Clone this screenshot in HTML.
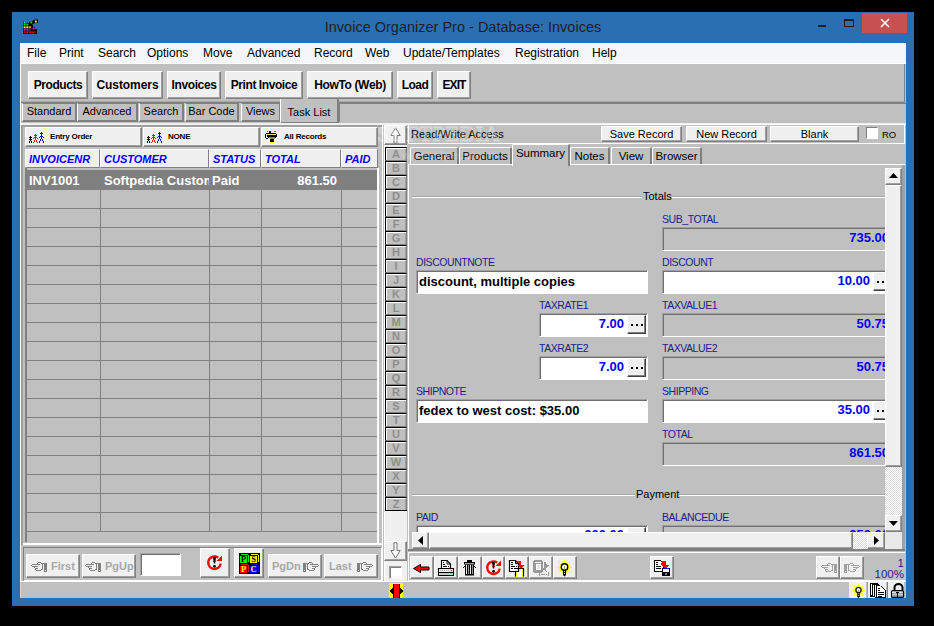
<!DOCTYPE html>
<html><head><meta charset="utf-8">
<style>
*{margin:0;padding:0;box-sizing:border-box}
html,body{width:934px;height:626px;overflow:hidden;background:#000;font-family:"Liberation Sans",sans-serif;position:relative}
div,span{position:absolute}
.title{left:-4px;top:19px;width:934px;text-align:center;font-size:14.5px;color:#1e1e1e;white-space:nowrap}
.menu span{top:46px;font-size:12px;color:#000;white-space:nowrap}
.btn{background:#f0f0f0;border:1px solid;border-color:#fff #808080 #808080 #fff;box-shadow:inset -1px -1px 0 #a0a0a0;font-weight:bold;font-size:12px;color:#000;text-align:center;white-space:nowrap}
.tab{background:#c0c0c0;border-style:solid;border-width:1px 2px 2px 1px;border-color:#808080 #808080 #808080 #fff;font-size:11px;text-align:center;color:#000;white-space:nowrap}
.rb{border:1px solid;border-color:#fff #808080 #808080 #fff}
.sk{border:1px solid;border-color:#808080 #fff #fff #808080}
.hl{height:1px}
.vl{width:1px}
.gh{background:#f0f0f0;border:1px solid;border-color:#fff #808080 #808080 #fff;color:#0000ff;font-weight:bold;font-style:italic;font-size:11px;white-space:nowrap;padding:3px 0 0 3px}
.lbl{font-size:10.5px;letter-spacing:-0.45px;color:#20208c;white-space:nowrap}
.fld{background:#fff;border:1px solid;border-color:#a0a0a0 #fff #fff #a0a0a0;box-shadow:inset 1px 1px 0 #707070}
.ro{background:#c0c0c0;border:1px solid;border-color:#a0a0a0 #fff #fff #a0a0a0;box-shadow:inset 1px 1px 0 #707070}
.val{font-size:13px;font-weight:bold;color:#0000ff;white-space:nowrap}
.txt{font-size:13px;font-weight:bold;color:#000;white-space:nowrap}
.ell{background:#f0f0f0;border:1px solid;border-color:#fff #404040 #404040 #fff;box-shadow:inset -1px -1px 0 #808080;font-size:10px;text-align:center;line-height:10px;font-weight:bold}
.let{background:#c0c0c0;border-style:solid;border-width:1px 1px 1px 1px;border-color:#000 #808080 #808080 #000;box-shadow:inset 1px 1px 0 #fff, inset -1px 0 0 #a0a0a0;color:#8e8e8e;font-size:11px;font-weight:bold;text-align:center;line-height:12px;padding-left:0}
.rtab{background:#c0c0c0;border-style:solid;border-width:1px 2px 0 1px;border-color:#fff #808080 #808080 #fff;border-radius:2px 2px 0 0;font-size:11.5px;text-align:center;line-height:16px;white-space:nowrap}
.nbt{font-size:11px;font-weight:bold;color:#a8a8a8;white-space:nowrap}
</style></head><body>
<!-- frame -->
<div style="left:12px;top:12px;width:902px;height:594px;background:#2b6fb3"></div>
<div class="title">Invoice Organizer Pro - Database: Invoices</div>
<!-- icon -->
<svg style="position:absolute;left:23px;top:19px" width="16" height="16" viewBox="0 0 16 16"><path d="M0 2H3V4H6V3L8 2.5L10 1.5L12 0.5H15V4H12L10 5L9 6H10V8H12V10H14V15H0z" fill="#000"/><rect x="0.6" y="2.3" width="2" height="2" fill="#00e8e8"/><rect x="0.6" y="4.6" width="2" height="2" fill="#00e000"/><rect x="3.3" y="4.6" width="2" height="2" fill="#00e000"/><rect x="7.3" y="2.5" width="2" height="2" fill="#00d000"/><rect x="11.9" y="1.5" width="2" height="2" fill="#e8e800"/><rect x="0.6" y="7.3" width="2" height="2" fill="#f0f000"/><rect x="3.3" y="7.3" width="2" height="2" fill="#f0f000"/><rect x="5.8" y="7.3" width="2" height="2" fill="#c8c800"/><rect x="0.6" y="9.6" width="2" height="2" fill="#f000f0"/><rect x="3.3" y="9.6" width="2" height="2" fill="#f000f0"/><rect x="5.8" y="9.6" width="2" height="2" fill="#900090"/><rect x="9.6" y="8.5" width="2" height="2" fill="#f000f0"/><rect x="0.6" y="12.3" width="2" height="2" fill="#f00000"/><rect x="3.3" y="12.3" width="2" height="2" fill="#f00000"/><rect x="5.8" y="12.3" width="2" height="2" fill="#f00000"/><rect x="8.3" y="12.3" width="2" height="2" fill="#f00000"/><rect x="10.6" y="12.3" width="2" height="2" fill="#c00000"/></svg>
<!-- min max close -->
<div style="left:818px;top:25px;width:8px;height:2px;background:#1e1e1e"></div>
<div style="left:844px;top:19px;width:10px;height:8px;border:1px solid #1e1e1e;border-top-width:2px"></div>
<div style="left:862px;top:13px;width:45px;height:20px;background:#c75050"></div>
<svg style="position:absolute;left:880px;top:18px" width="10" height="10" viewBox="0 0 10 10"><path d="M1 1L9 9M9 1L1 9" stroke="#fff" stroke-width="1.6"/></svg>

<!-- client -->
<div style="left:20px;top:43px;width:886px;height:555px;background:#c0c0c0"></div>
<div style="left:20px;top:43px;width:886px;height:20px;background:#f5f6f7"></div>
<div class="menu">
<span style="left:27px">File</span><span style="left:59px">Print</span><span style="left:98px">Search</span><span style="left:147px">Options</span><span style="left:203px">Move</span><span style="left:247px">Advanced</span><span style="left:314px">Record</span><span style="left:365px">Web</span><span style="left:403px">Update/Templates</span><span style="left:515px">Registration</span><span style="left:592px">Help</span>
</div>
<!-- toolbar panel -->
<div style="left:20px;top:63px;width:886px;height:1px;background:#fff"></div>
<div style="left:20px;top:63px;width:1px;height:519px;background:#fff"></div><div style="left:20px;top:582px;width:1px;height:16px;background:#d8d4d4"></div>
<div style="left:21px;top:101px;width:884px;height:1px;background:#a8a8a8"></div><div style="left:21px;top:102px;width:884px;height:1px;background:#808080"></div><div style="left:904px;top:64px;width:1px;height:39px;background:#808080"></div>
<div class="btn" style="left:28px;top:71px;width:60px;height:28px;line-height:26px;letter-spacing:-0.45px">Products</div>
<div class="btn" style="left:92px;top:71px;width:71px;height:28px;line-height:26px;letter-spacing:-0.08px">Customers</div>
<div class="btn" style="left:167px;top:71px;width:54px;height:28px;line-height:26px;letter-spacing:-0.37px">Invoices</div>
<div class="btn" style="left:225px;top:71px;width:78px;height:28px;line-height:26px;letter-spacing:-0.42px">Print Invoice</div>
<div class="btn" style="left:307px;top:71px;width:86px;height:28px;line-height:26px;letter-spacing:-0.35px">HowTo (Web)</div>
<div class="btn" style="left:397px;top:71px;width:36px;height:28px;line-height:26px;letter-spacing:-0.6px">Load</div>
<div class="btn" style="left:437px;top:71px;width:34px;height:28px;line-height:26px;letter-spacing:-0.9px">EXIT</div>
<!-- tabs -->
<div class="tab" style="left:22px;top:103px;width:55px;height:19px;line-height:15px">Standard</div>
<div class="tab" style="left:77px;top:103px;width:61px;height:19px;line-height:15px">Advanced</div>
<div class="tab" style="left:139px;top:103px;width:45px;height:19px;line-height:15px">Search</div>
<div class="tab" style="left:185px;top:103px;width:54px;height:19px;line-height:15px">Bar Code</div>
<div class="tab" style="left:241px;top:103px;width:40px;height:19px;line-height:15px">Views</div>
<div style="left:280px;top:99px;width:59px;height:25px;background:#c0c0c0;border-style:solid;border-width:0 2px 2px 1px;border-color:#808080 #808080 #808080 #fff;font-size:11px;text-align:center;line-height:27px">Task List</div>
<div style="left:339px;top:103px;width:567px;height:19px;border-top:1px solid #808080;border-left:1px solid #808080"></div>
<div style="left:21px;top:123px;width:885px;height:2px;background:#f0f0f0"></div>

<!-- LEFT PANEL -->
<div style="left:21px;top:125px;width:362px;height:420px;border-style:solid;border-width:2px 0 0 2px;border-color:#a0a0a0"></div>
<div style="left:23px;top:543px;width:360px;height:2px;background:#fff"></div>
<div class="btn" style="left:25px;top:127px;width:117px;height:20px;font-weight:bold;font-size:8px;letter-spacing:-0.2px;text-align:left;padding:4px 0 0 24px">Entry Order</div>
<div class="btn" style="left:143px;top:127px;width:117px;height:20px;font-weight:bold;font-size:8px;letter-spacing:-0.2px;text-align:left;padding:4px 0 0 24px">NONE</div>
<div class="btn" style="left:261px;top:127px;width:117px;height:20px;font-weight:bold;font-size:8px;letter-spacing:-0.2px;text-align:left;padding:4px 0 0 22px">All Records</div>
<!-- grid -->
<div style="left:25px;top:149px;width:354px;height:393px;border-left:2px solid #808080"></div>
<div class="gh" style="left:25px;top:149px;width:75px;height:19px">INVOICENR</div>
<div class="gh" style="left:100px;top:149px;width:109px;height:19px">CUSTOMER</div>
<div class="gh" style="left:209px;top:149px;width:52px;height:19px">STATUS</div>
<div class="gh" style="left:261px;top:149px;width:80px;height:19px">TOTAL</div>
<div class="gh" style="left:341px;top:149px;width:37px;height:19px">PAID</div>
<div style="left:26px;top:189px;width:351px;height:1px;background:#808080"></div>
<div style="left:26px;top:208px;width:351px;height:1px;background:#808080"></div>
<div style="left:26px;top:227px;width:351px;height:1px;background:#808080"></div>
<div style="left:26px;top:246px;width:351px;height:1px;background:#808080"></div>
<div style="left:26px;top:265px;width:351px;height:1px;background:#808080"></div>
<div style="left:26px;top:284px;width:351px;height:1px;background:#808080"></div>
<div style="left:26px;top:303px;width:351px;height:1px;background:#808080"></div>
<div style="left:26px;top:322px;width:351px;height:1px;background:#808080"></div>
<div style="left:26px;top:341px;width:351px;height:1px;background:#808080"></div>
<div style="left:26px;top:360px;width:351px;height:1px;background:#808080"></div>
<div style="left:26px;top:379px;width:351px;height:1px;background:#808080"></div>
<div style="left:26px;top:398px;width:351px;height:1px;background:#808080"></div>
<div style="left:26px;top:417px;width:351px;height:1px;background:#808080"></div>
<div style="left:26px;top:436px;width:351px;height:1px;background:#808080"></div>
<div style="left:26px;top:455px;width:351px;height:1px;background:#808080"></div>
<div style="left:26px;top:474px;width:351px;height:1px;background:#808080"></div>
<div style="left:26px;top:493px;width:351px;height:1px;background:#808080"></div>
<div style="left:26px;top:512px;width:351px;height:1px;background:#808080"></div>
<div style="left:26px;top:531px;width:351px;height:1px;background:#808080"></div>
<div style="left:100px;top:170px;width:1px;height:362px;background:#808080"></div>
<div style="left:209px;top:170px;width:1px;height:362px;background:#808080"></div>
<div style="left:261px;top:170px;width:1px;height:362px;background:#808080"></div>
<div style="left:341px;top:170px;width:1px;height:362px;background:#808080"></div>
<div style="left:25px;top:170px;width:352px;height:19px;background:#808080"></div><div style="left:377px;top:168px;width:2px;height:375px;background:#fff"></div>
<div style="left:29px;top:173px;font-size:13px;font-weight:bold;color:#fff">INV1001</div>
<div style="left:104px;top:173px;width:105px;overflow:hidden;font-size:13px;font-weight:bold;color:#fff;white-space:nowrap">Softpedia Customer</div>
<div style="left:212px;top:173px;font-size:13px;font-weight:bold;color:#fff">Paid</div>
<div style="left:261px;top:173px;width:76px;text-align:right;font-size:13px;font-weight:bold;color:#fff">861.50</div>
<div style="left:382px;top:125px;width:1px;height:457px;background:#fff"></div>

<!-- nav panel -->
<div style="left:23px;top:547px;width:359px;height:34px;border-style:solid;border-width:1px 1px 1px 1px;border-color:#808080 #fff #fff #808080"></div>

<!-- alpha strip -->
<div style="left:384px;top:125px;width:23px;height:456px;background:#f0f0f0;border-left:1px solid #fff"></div>
<div class="let" style="left:385px;top:147px;width:22px;height:14px">A</div>
<div class="let" style="left:385px;top:161px;width:22px;height:14px">B</div>
<div class="let" style="left:385px;top:175px;width:22px;height:14px">C</div>
<div class="let" style="left:385px;top:189px;width:22px;height:14px">D</div>
<div class="let" style="left:385px;top:203px;width:22px;height:14px">E</div>
<div class="let" style="left:385px;top:217px;width:22px;height:14px">F</div>
<div class="let" style="left:385px;top:231px;width:22px;height:14px">G</div>
<div class="let" style="left:385px;top:245px;width:22px;height:14px">H</div>
<div class="let" style="left:385px;top:259px;width:22px;height:14px">I</div>
<div class="let" style="left:385px;top:273px;width:22px;height:14px">J</div>
<div class="let" style="left:385px;top:287px;width:22px;height:14px">K</div>
<div class="let" style="left:385px;top:301px;width:22px;height:14px">L</div>
<div class="let" style="left:385px;top:315px;width:22px;height:14px">M</div>
<div class="let" style="left:385px;top:329px;width:22px;height:14px">N</div>
<div class="let" style="left:385px;top:343px;width:22px;height:14px">O</div>
<div class="let" style="left:385px;top:357px;width:22px;height:14px">P</div>
<div class="let" style="left:385px;top:371px;width:22px;height:14px">Q</div>
<div class="let" style="left:385px;top:385px;width:22px;height:14px">R</div>
<div class="let" style="left:385px;top:399px;width:22px;height:14px">S</div>
<div class="let" style="left:385px;top:413px;width:22px;height:14px">T</div>
<div class="let" style="left:385px;top:427px;width:22px;height:14px">U</div>
<div class="let" style="left:385px;top:441px;width:22px;height:14px">V</div>
<div class="let" style="left:385px;top:455px;width:22px;height:14px">W</div>
<div class="let" style="left:385px;top:469px;width:22px;height:14px">X</div>
<div class="let" style="left:385px;top:483px;width:22px;height:14px">Y</div>
<div class="let" style="left:385px;top:497px;width:22px;height:14px">Z</div>

<!-- RIGHT PANEL -->
<div style="left:408px;top:124px;width:497px;height:20px;border:1px solid #fff"></div>
<div style="left:411px;top:128px;font-size:11px;color:#000">Read/Write Access</div>
<div class="btn" style="left:601px;top:126px;width:81px;height:16px;font-weight:normal;font-size:11px;line-height:14px">Save Record</div>
<div class="btn" style="left:686px;top:126px;width:81px;height:16px;font-weight:normal;font-size:11px;line-height:14px">New Record</div>
<div class="btn" style="left:770px;top:126px;width:89px;height:16px;font-weight:normal;font-size:11px;line-height:14px">Blank</div>
<div style="left:866px;top:127px;width:12px;height:12px;background:#fff;border:1px solid;border-color:#808080 #fff #fff #808080"></div>
<div style="left:882px;top:129px;font-size:9.5px">RO</div>


<!-- right tabs -->
<div class="rtab" style="left:410px;top:147px;width:49px;height:18px">General</div>
<div class="rtab" style="left:459px;top:147px;width:53px;height:18px">Products</div>
<div class="rtab" style="left:570px;top:147px;width:40px;height:18px">Notes</div>
<div class="rtab" style="left:611px;top:147px;width:41px;height:18px">View</div>
<div class="rtab" style="left:652px;top:147px;width:50px;height:18px">Browser</div>
<div style="left:408px;top:164px;width:497px;height:1px;background:#fff"></div>
<div class="rtab" style="left:512px;top:144px;width:58px;height:22px;border-bottom:none;line-height:17px">Summary</div>
<div style="left:902px;top:165px;width:3px;height:384px;background:#a0a0a0"></div>

<div style="left:408px;top:164px;width:1px;height:386px;background:#fff"></div>
<!-- form -->
<div style="left:412px;top:196px;width:230px;height:1px;background:#a4a4a4"></div>
<div style="left:412px;top:197px;width:230px;height:1px;background:#fff"></div>
<div style="left:643px;top:190px;font-size:11px">Totals</div>
<div style="left:672px;top:196px;width:213px;height:1px;background:#a4a4a4"></div>
<div style="left:672px;top:197px;width:213px;height:1px;background:#fff"></div>

<div style="left:412px;top:494px;width:223px;height:1px;background:#a4a4a4"></div>
<div style="left:412px;top:495px;width:223px;height:1px;background:#fff"></div>
<div style="left:636px;top:488px;font-size:11px">Payment</div>
<div style="left:679px;top:494px;width:206px;height:1px;background:#a4a4a4"></div>
<div style="left:679px;top:495px;width:206px;height:1px;background:#fff"></div>

<div class="lbl" style="left:662px;top:213px">SUB_TOTAL</div>
<div class="ro" style="left:662px;top:227px;width:230px;height:24px"></div>
<div class="val" style="left:700px;top:230px;width:189px;text-align:right">735.00</div>

<div class="lbl" style="left:416px;top:256px">DISCOUNTNOTE</div>
<div class="fld" style="left:416px;top:270px;width:232px;height:24px"></div>
<div class="txt" style="left:419px;top:274px">discount, multiple copies</div>
<div class="lbl" style="left:662px;top:256px">DISCOUNT</div>
<div class="fld" style="left:662px;top:270px;width:230px;height:24px"></div>
<div class="val" style="left:700px;top:273px;width:170px;text-align:right">10.00</div>
<div class="ell" style="left:873px;top:272px;width:18px;height:19px"><svg width="14" height="4" style="position:absolute;left:2px;top:7px" shape-rendering="crispEdges"><rect x="1" y="1" width="2" height="2" fill="#000"/><rect x="6" y="1" width="2" height="2" fill="#000"/><rect x="11" y="1" width="2" height="2" fill="#000"/></svg></div>

<div class="lbl" style="left:539px;top:299px">TAXRATE1</div>
<div class="fld" style="left:539px;top:313px;width:109px;height:24px"></div>
<div class="val" style="left:560px;top:316px;width:64px;text-align:right">7.00</div>
<div class="ell" style="left:627px;top:315px;width:19px;height:19px"><svg width="14" height="4" style="position:absolute;left:2px;top:7px" shape-rendering="crispEdges"><rect x="1" y="1" width="2" height="2" fill="#000"/><rect x="6" y="1" width="2" height="2" fill="#000"/><rect x="11" y="1" width="2" height="2" fill="#000"/></svg></div>
<div class="lbl" style="left:662px;top:299px">TAXVALUE1</div>
<div class="ro" style="left:662px;top:313px;width:230px;height:24px"></div>
<div class="val" style="left:700px;top:316px;width:189px;text-align:right">50.75</div>

<div class="lbl" style="left:539px;top:342px">TAXRATE2</div>
<div class="fld" style="left:539px;top:356px;width:109px;height:24px"></div>
<div class="val" style="left:560px;top:359px;width:64px;text-align:right">7.00</div>
<div class="ell" style="left:627px;top:358px;width:19px;height:19px"><svg width="14" height="4" style="position:absolute;left:2px;top:7px" shape-rendering="crispEdges"><rect x="1" y="1" width="2" height="2" fill="#000"/><rect x="6" y="1" width="2" height="2" fill="#000"/><rect x="11" y="1" width="2" height="2" fill="#000"/></svg></div>
<div class="lbl" style="left:662px;top:342px">TAXVALUE2</div>
<div class="ro" style="left:662px;top:356px;width:230px;height:24px"></div>
<div class="val" style="left:700px;top:359px;width:189px;text-align:right">50.75</div>

<div class="lbl" style="left:416px;top:385px">SHIPNOTE</div>
<div class="fld" style="left:416px;top:399px;width:232px;height:24px"></div>
<div class="txt" style="left:419px;top:403px">fedex to west cost: $35.00</div>
<div class="lbl" style="left:662px;top:385px">SHIPPING</div>
<div class="fld" style="left:662px;top:399px;width:230px;height:24px"></div>
<div class="val" style="left:700px;top:402px;width:170px;text-align:right">35.00</div>
<div class="ell" style="left:873px;top:401px;width:18px;height:19px"><svg width="14" height="4" style="position:absolute;left:2px;top:7px" shape-rendering="crispEdges"><rect x="1" y="1" width="2" height="2" fill="#000"/><rect x="6" y="1" width="2" height="2" fill="#000"/><rect x="11" y="1" width="2" height="2" fill="#000"/></svg></div>

<div class="lbl" style="left:662px;top:428px">TOTAL</div>
<div class="ro" style="left:662px;top:442px;width:230px;height:24px"></div>
<div class="val" style="left:700px;top:445px;width:189px;text-align:right">861.50</div>

<div class="lbl" style="left:416px;top:511px">PAID</div>
<div class="fld" style="left:416px;top:525px;width:232px;height:24px"></div>
<div class="lbl" style="left:662px;top:511px">BALANCEDUE</div>
<div class="ro" style="left:662px;top:525px;width:230px;height:24px"></div>

<div style="left:418px;top:527px;width:230px;height:5px;overflow:hidden"><div class="val" style="left:140px;top:0px;width:66px;text-align:right">600.00</div></div>
<div class="ell" style="left:627px;top:527px;width:19px;height:19px"></div>
<div style="left:664px;top:527px;width:226px;height:5px;overflow:hidden"><div class="val" style="left:0px;top:0px;width:225px;text-align:right">250.00</div></div>
<!-- vscroll -->
<div style="left:885px;top:167px;width:17px;height:365px;background:#c0c0c0"></div>
<div class="btn" style="left:885px;top:168px;width:17px;height:17px"></div>
<svg style="position:absolute;left:889px;top:173px" width="9" height="5"><path d="M4.5 0L9 5H0z" fill="#000"/></svg>
<div class="btn" style="left:885px;top:185px;width:17px;height:282px"></div>
<div style="left:885px;top:467px;width:17px;height:48px;background:repeating-conic-gradient(#fff 0 25%,#dcdcdc 0 50%) 0 0/2px 2px"></div>
<div class="btn" style="left:885px;top:515px;width:17px;height:17px"></div>
<svg style="position:absolute;left:889px;top:521px" width="9" height="5"><path d="M0 0H9L4.5 5z" fill="#000"/></svg>
<!-- hscroll -->
<div style="left:410px;top:532px;width:492px;height:17px;background:#c0c0c0"></div>
<div class="btn" style="left:412px;top:532px;width:17px;height:17px"></div>
<svg style="position:absolute;left:418px;top:536px" width="5" height="9"><path d="M0 4.5L5 0V9z" fill="#000"/></svg>
<div class="btn" style="left:429px;top:532px;width:424px;height:17px"></div>
<div style="left:853px;top:532px;width:14px;height:17px;background:repeating-conic-gradient(#fff 0 25%,#dcdcdc 0 50%) 0 0/2px 2px"></div>
<div class="btn" style="left:867px;top:532px;width:18px;height:17px"></div>
<svg style="position:absolute;left:874px;top:536px" width="5" height="9"><path d="M0 0L5 4.5L0 9z" fill="#000"/></svg>
<div style="left:885px;top:532px;width:17px;height:17px;background:#e8e8e8"></div>
<div style="left:408px;top:549px;width:497px;height:2px;background:#808080"></div>

<!-- bottom toolbar right -->
<div style="left:408px;top:552px;width:497px;height:29px;border-style:solid;border-width:1px 0 1px 1px;border-color:#fff #fff #fff #fff"></div>
<div class="btn tb" style="left:410px;top:556px;width:24px;height:23px"></div>
<div class="btn tb" style="left:434px;top:556px;width:24px;height:23px"></div>
<div class="btn tb" style="left:458px;top:556px;width:24px;height:23px"></div>
<div class="btn tb" style="left:482px;top:556px;width:23px;height:23px"></div>
<div class="btn tb" style="left:505px;top:556px;width:24px;height:23px"></div>
<div class="btn tb" style="left:529px;top:556px;width:24px;height:23px"></div>
<div class="btn tb" style="left:553px;top:556px;width:24px;height:23px"></div>
<div class="btn tb" style="left:650px;top:556px;width:24px;height:23px"></div>
<div class="btn tb" style="left:816px;top:556px;width:24px;height:23px"></div>
<div class="btn tb" style="left:840px;top:556px;width:24px;height:23px"></div>
<div style="left:861px;top:558px;width:43px;text-align:right;font-size:11.5px;color:#2c1c8c;line-height:11px">1<br>100%</div>

<!-- left nav buttons -->
<div class="btn" style="left:26px;top:554px;width:54px;height:24px"></div>
<div class="btn" style="left:82px;top:554px;width:54px;height:24px"></div>
<div class="fld" style="left:140px;top:553px;width:41px;height:23px"></div>
<div class="btn" style="left:200px;top:548px;width:30px;height:30px"></div>
<div class="btn" style="left:234px;top:548px;width:30px;height:30px"></div>
<div class="btn" style="left:268px;top:554px;width:54px;height:24px"></div>
<div class="btn" style="left:324px;top:554px;width:54px;height:24px"></div>
<div class="nbt" style="left:51px;top:560px">First</div>
<div class="nbt" style="left:105px;top:560px">PgUp</div>
<div class="nbt" style="left:272px;top:560px">PgDn</div>
<div class="nbt" style="left:329px;top:560px">Last</div>
<!-- alpha up/down -->
<div class="btn" style="left:384px;top:125px;width:23px;height:20px"></div>
<div class="btn" style="left:384px;top:541px;width:23px;height:20px"></div>
<div style="left:389px;top:566px;width:13px;height:13px;background:#fff;border:1px solid;border-color:#a0a0a0 #fff #fff #a0a0a0;box-shadow:inset 1px 1px 0 #808080"></div><div style="left:385px;top:510px;width:22px;height:1px;background:#000"></div>

<!-- status bar -->
<div style="left:21px;top:581px;width:885px;height:1px;background:#fff"></div>
<div style="left:389px;top:583px;width:14px;height:14px;background:#ffff00"></div>
<div style="left:849px;top:582px;width:17px;height:16px;background:#f0f0f0"></div>
<div style="left:867px;top:582px;width:19px;height:16px;background:#f0f0f0"></div>
<div style="left:887px;top:582px;width:17px;height:16px;background:#f0f0f0"></div>

<svg style="position:absolute;left:28px;top:132px" width="16" height="11" viewBox="0 0 16 11" shape-rendering="crispEdges"><g fill="#000"><rect x="2" y="4" width="1" height="1"/><rect x="1" y="5" width="1" height="1"/><rect x="2" y="5" width="1" height="1"/><rect x="3" y="5" width="1" height="1"/><rect x="2" y="6" width="1" height="1"/><rect x="1" y="7" width="1" height="1"/><rect x="2" y="7" width="1" height="1"/><rect x="3" y="7" width="1" height="1"/><rect x="2" y="8" width="1" height="1"/><rect x="1" y="9" width="1" height="1"/><rect x="1" y="10" width="1" height="1"/><rect x="3" y="9" width="1" height="1"/><rect x="3" y="10" width="1" height="1"/></g><g fill="#f00"><rect x="7" y="2" width="1" height="1"/><rect x="6" y="3" width="1" height="1"/><rect x="7" y="3" width="1" height="1"/><rect x="8" y="3" width="1" height="1"/><rect x="7" y="4" width="1" height="1"/><rect x="6" y="5" width="1" height="1"/><rect x="7" y="5" width="1" height="1"/><rect x="8" y="5" width="1" height="1"/><rect x="5" y="6" width="1" height="1"/><rect x="7" y="6" width="1" height="1"/><rect x="9" y="6" width="1" height="1"/><rect x="7" y="7" width="1" height="1"/><rect x="6" y="8" width="1" height="1"/><rect x="8" y="8" width="1" height="1"/><rect x="6" y="9" width="1" height="1"/><rect x="8" y="9" width="1" height="1"/><rect x="5" y="10" width="1" height="1"/><rect x="9" y="10" width="1" height="1"/></g><g fill="#00f"><rect x="13" y="0" width="1" height="1"/><rect x="12" y="1" width="1" height="1"/><rect x="13" y="1" width="1" height="1"/><rect x="14" y="1" width="1" height="1"/><rect x="13" y="2" width="1" height="1"/><rect x="13" y="3" width="1" height="1"/><rect x="12" y="4" width="1" height="1"/><rect x="13" y="4" width="1" height="1"/><rect x="14" y="4" width="1" height="1"/><rect x="11" y="5" width="1" height="1"/><rect x="13" y="5" width="1" height="1"/><rect x="15" y="5" width="1" height="1"/><rect x="13" y="6" width="1" height="1"/><rect x="12" y="7" width="1" height="1"/><rect x="14" y="7" width="1" height="1"/><rect x="12" y="8" width="1" height="1"/><rect x="14" y="8" width="1" height="1"/><rect x="11" y="9" width="1" height="1"/><rect x="15" y="9" width="1" height="1"/><rect x="11" y="10" width="1" height="1"/><rect x="15" y="10" width="1" height="1"/></g></svg><svg style="position:absolute;left:146px;top:132px" width="16" height="11" viewBox="0 0 16 11" shape-rendering="crispEdges"><g fill="#000"><rect x="2" y="4" width="1" height="1"/><rect x="1" y="5" width="1" height="1"/><rect x="2" y="5" width="1" height="1"/><rect x="3" y="5" width="1" height="1"/><rect x="2" y="6" width="1" height="1"/><rect x="1" y="7" width="1" height="1"/><rect x="2" y="7" width="1" height="1"/><rect x="3" y="7" width="1" height="1"/><rect x="2" y="8" width="1" height="1"/><rect x="1" y="9" width="1" height="1"/><rect x="1" y="10" width="1" height="1"/><rect x="3" y="9" width="1" height="1"/><rect x="3" y="10" width="1" height="1"/></g><g fill="#f00"><rect x="7" y="2" width="1" height="1"/><rect x="6" y="3" width="1" height="1"/><rect x="7" y="3" width="1" height="1"/><rect x="8" y="3" width="1" height="1"/><rect x="7" y="4" width="1" height="1"/><rect x="6" y="5" width="1" height="1"/><rect x="7" y="5" width="1" height="1"/><rect x="8" y="5" width="1" height="1"/><rect x="5" y="6" width="1" height="1"/><rect x="7" y="6" width="1" height="1"/><rect x="9" y="6" width="1" height="1"/><rect x="7" y="7" width="1" height="1"/><rect x="6" y="8" width="1" height="1"/><rect x="8" y="8" width="1" height="1"/><rect x="6" y="9" width="1" height="1"/><rect x="8" y="9" width="1" height="1"/><rect x="5" y="10" width="1" height="1"/><rect x="9" y="10" width="1" height="1"/></g><g fill="#00f"><rect x="13" y="0" width="1" height="1"/><rect x="12" y="1" width="1" height="1"/><rect x="13" y="1" width="1" height="1"/><rect x="14" y="1" width="1" height="1"/><rect x="13" y="2" width="1" height="1"/><rect x="13" y="3" width="1" height="1"/><rect x="12" y="4" width="1" height="1"/><rect x="13" y="4" width="1" height="1"/><rect x="14" y="4" width="1" height="1"/><rect x="11" y="5" width="1" height="1"/><rect x="13" y="5" width="1" height="1"/><rect x="15" y="5" width="1" height="1"/><rect x="13" y="6" width="1" height="1"/><rect x="12" y="7" width="1" height="1"/><rect x="14" y="7" width="1" height="1"/><rect x="12" y="8" width="1" height="1"/><rect x="14" y="8" width="1" height="1"/><rect x="11" y="9" width="1" height="1"/><rect x="15" y="9" width="1" height="1"/><rect x="11" y="10" width="1" height="1"/><rect x="15" y="10" width="1" height="1"/></g></svg><svg style="position:absolute;left:265px;top:131px" width="12" height="12" viewBox="0 0 12 12" shape-rendering="crispEdges"><rect x="2" y="0" width="1" height="1" fill="#f0f"/><rect x="9" y="0" width="2" height="1" fill="#f0f"/><rect x="4" y="0" width="2" height="2" fill="#000"/><rect x="6" y="0" width="1" height="1" fill="#ff0"/><rect x="1" y="2" width="10" height="1" fill="#000"/><rect x="0" y="3" width="1" height="4" fill="#000"/><rect x="1" y="7" width="2" height="1" fill="#000"/><rect x="2" y="3" width="3" height="1" fill="#ff0"/><rect x="6" y="3" width="3" height="1" fill="#ff0"/><rect x="11" y="3" width="1" height="1" fill="#000"/><rect x="2" y="4" width="10" height="2" fill="#000"/><path d="M3 6H11L8 9H6z" fill="#808080"/><rect x="3" y="6" width="1" height="1" fill="#000"/><rect x="10" y="6" width="1" height="1" fill="#000"/><rect x="5" y="8" width="4" height="3" fill="#000"/><rect x="5" y="11" width="4" height="1" fill="#ff0"/></svg><svg style="position:absolute;left:31px;top:562px" width="16" height="11" viewBox="0 0 16 11" shape-rendering="crispEdges"><g fill="#808080"><rect x="7" y="0" width="3" height="1"/><rect x="6" y="1" width="1" height="1"/><rect x="1" y="2" width="8" height="1"/><rect x="0" y="3" width="1" height="1"/><rect x="1" y="4" width="6" height="1"/><rect x="3" y="5" width="1" height="1"/><rect x="4" y="6" width="3" height="1"/><rect x="4" y="7" width="1" height="1"/><rect x="10" y="7" width="1" height="1"/><rect x="5" y="8" width="5" height="1"/><rect x="10" y="1" width="6" height="1"/><rect x="11" y="1" width="1" height="7"/><rect x="13" y="1" width="3" height="9"/></g><rect x="14" y="8" width="1" height="1" fill="#fff"/></svg><svg style="position:absolute;left:85px;top:562px" width="16" height="11" viewBox="0 0 16 11" shape-rendering="crispEdges"><g fill="#808080"><rect x="7" y="0" width="3" height="1"/><rect x="6" y="1" width="1" height="1"/><rect x="1" y="2" width="8" height="1"/><rect x="0" y="3" width="1" height="1"/><rect x="1" y="4" width="6" height="1"/><rect x="3" y="5" width="1" height="1"/><rect x="4" y="6" width="3" height="1"/><rect x="4" y="7" width="1" height="1"/><rect x="10" y="7" width="1" height="1"/><rect x="5" y="8" width="5" height="1"/><rect x="10" y="1" width="6" height="1"/><rect x="11" y="1" width="1" height="7"/><rect x="13" y="1" width="3" height="9"/></g><rect x="14" y="8" width="1" height="1" fill="#fff"/></svg><svg style="position:absolute;left:303px;top:562px" width="16" height="11" viewBox="0 0 16 11" shape-rendering="crispEdges"><g transform="translate(16,0) scale(-1,1)"><g fill="#808080"><rect x="7" y="0" width="3" height="1"/><rect x="6" y="1" width="1" height="1"/><rect x="1" y="2" width="8" height="1"/><rect x="0" y="3" width="1" height="1"/><rect x="1" y="4" width="6" height="1"/><rect x="3" y="5" width="1" height="1"/><rect x="4" y="6" width="3" height="1"/><rect x="4" y="7" width="1" height="1"/><rect x="10" y="7" width="1" height="1"/><rect x="5" y="8" width="5" height="1"/><rect x="10" y="1" width="6" height="1"/><rect x="11" y="1" width="1" height="7"/><rect x="13" y="1" width="3" height="9"/></g><rect x="14" y="8" width="1" height="1" fill="#fff"/></g></svg><svg style="position:absolute;left:357px;top:562px" width="16" height="11" viewBox="0 0 16 11" shape-rendering="crispEdges"><g transform="translate(16,0) scale(-1,1)"><g fill="#808080"><rect x="7" y="0" width="3" height="1"/><rect x="6" y="1" width="1" height="1"/><rect x="1" y="2" width="8" height="1"/><rect x="0" y="3" width="1" height="1"/><rect x="1" y="4" width="6" height="1"/><rect x="3" y="5" width="1" height="1"/><rect x="4" y="6" width="3" height="1"/><rect x="4" y="7" width="1" height="1"/><rect x="10" y="7" width="1" height="1"/><rect x="5" y="8" width="5" height="1"/><rect x="10" y="1" width="6" height="1"/><rect x="11" y="1" width="1" height="7"/><rect x="13" y="1" width="3" height="9"/></g><rect x="14" y="8" width="1" height="1" fill="#fff"/></g></svg><svg style="position:absolute;left:821px;top:563px" width="16" height="11" viewBox="0 0 16 11" shape-rendering="crispEdges"><g fill="#a0a0a0"><rect x="7" y="0" width="3" height="1"/><rect x="6" y="1" width="1" height="1"/><rect x="1" y="2" width="8" height="1"/><rect x="0" y="3" width="1" height="1"/><rect x="1" y="4" width="6" height="1"/><rect x="3" y="5" width="1" height="1"/><rect x="4" y="6" width="3" height="1"/><rect x="4" y="7" width="1" height="1"/><rect x="10" y="7" width="1" height="1"/><rect x="5" y="8" width="5" height="1"/><rect x="10" y="1" width="6" height="1"/><rect x="11" y="1" width="1" height="7"/><rect x="13" y="1" width="3" height="9"/></g><rect x="14" y="8" width="1" height="1" fill="#fff"/></svg><svg style="position:absolute;left:844px;top:563px" width="16" height="11" viewBox="0 0 16 11" shape-rendering="crispEdges"><g transform="translate(16,0) scale(-1,1)"><g fill="#a0a0a0"><rect x="7" y="0" width="3" height="1"/><rect x="6" y="1" width="1" height="1"/><rect x="1" y="2" width="8" height="1"/><rect x="0" y="3" width="1" height="1"/><rect x="1" y="4" width="6" height="1"/><rect x="3" y="5" width="1" height="1"/><rect x="4" y="6" width="3" height="1"/><rect x="4" y="7" width="1" height="1"/><rect x="10" y="7" width="1" height="1"/><rect x="5" y="8" width="5" height="1"/><rect x="10" y="1" width="6" height="1"/><rect x="11" y="1" width="1" height="7"/><rect x="13" y="1" width="3" height="9"/></g><rect x="14" y="8" width="1" height="1" fill="#fff"/></g></svg><svg style="position:absolute;left:413px;top:564px" width="17" height="9" viewBox="0 0 17 9"><path d="M0.5 4.5L7.5 0.5V3H16V6H7.5V8.5z" fill="#f00" stroke="#000" stroke-width="1"/></svg><svg style="position:absolute;left:529px;top:557px" width="24" height="21" viewBox="0 0 24 21"><g fill="#999" shape-rendering="crispEdges"><rect x="5" y="3" width="8" height="1"/><rect x="4" y="4" width="10" height="11"/><rect x="5" y="15" width="8" height="1"/><rect x="14" y="5" width="3" height="8"/><path d="M17 7L20 8.5L17 11z"/><rect x="10" y="15" width="1" height="4"/><rect x="12" y="17" width="4" height="1"/><rect x="17" y="17" width="1" height="1"/><rect x="19" y="15" width="1" height="4"/><path d="M15 12L19 15H18L15 13z"/></g><rect x="6" y="5" width="6" height="1" fill="#fff"/><rect x="7" y="7" width="5" height="6" fill="#fff"/><rect x="8" y="8" width="3" height="4" fill="#e8e8e8"/><rect x="14" y="5" width="1" height="6" fill="#fff"/></svg><svg style="position:absolute;left:654px;top:560px" width="16" height="16" viewBox="0 0 16 16" shape-rendering="crispEdges"><path d="M0.5 0.5H6.5L9.5 3.5V11.5H0.5z" fill="#fff" stroke="#000"/><rect x="2" y="2" width="2" height="1" fill="#000"/><rect x="2" y="4" width="2" height="1" fill="#000"/><rect x="2" y="6" width="5" height="1" fill="#000"/><rect x="2" y="8" width="5" height="1" fill="#000"/><path d="M8 1H12V5H15L11 9L7 5z" fill="#f00"/><rect x="8" y="8" width="8" height="8" fill="#000"/><rect x="9" y="8" width="6" height="1" fill="#00f"/><rect x="9" y="9" width="6" height="3" fill="#fff"/><rect x="11" y="13" width="2" height="2" fill="#808080"/></svg><svg style="position:absolute;left:390px;top:584px" width="13" height="14" viewBox="0 0 13 14" shape-rendering="crispEdges"><rect x="0" y="0" width="13" height="14" fill="#ff0"/><rect x="3" y="0" width="7" height="14" fill="#000"/><rect x="4" y="0" width="5" height="14" fill="#f00"/><path d="M0 7L3 3V11z M13 7L10 3V11z" fill="#000"/></svg>
<svg style="position:absolute;left:390px;top:127px" width="11" height="17" viewBox="0 0 11 17"><path d="M5.5 0.8L10.2 8.5H7V16.2H4V8.5H0.8z" fill="#fff" stroke="#707070" stroke-width="1"/></svg>
<svg style="position:absolute;left:390px;top:542px" width="11" height="17" viewBox="0 0 11 17"><path d="M5.5 16.2L10.2 8.5H7V0.8H4V8.5H0.8z" fill="#fff" stroke="#707070" stroke-width="1"/></svg>
<div style="left:377px;top:121px;font-family:'Liberation Serif',serif;font-size:22px;letter-spacing:0.5px;color:rgba(255,255,255,0.12);-webkit-text-stroke:0.8px rgba(255,255,255,0.35);white-space:nowrap;pointer-events:none">SOFTPEDIA</div>
<div style="left:402px;top:149px;font-family:'Liberation Sans',sans-serif;font-size:11px;color:rgba(255,255,255,0.25);white-space:nowrap">www.softpedia.com</div>
<svg style="position:absolute;left:205px;top:553px" width="20" height="19" viewBox="0 0 20 19"><path d="M15.7 10.6A6.3 6.3 0 1 1 13.2 4.6" fill="none" stroke="#f00" stroke-width="2.4"/><path d="M11.5 8L17 2.5V8z" fill="#f00"/><path d="M8 4H11L10.2 10.5H8.8z" fill="#000"/><rect x="8.4" y="8" width="0.8" height="1" fill="#c00"/><rect x="9.8" y="8" width="0.8" height="1" fill="#c00"/><circle cx="9.5" cy="13.3" r="1.4" fill="#000"/></svg><svg style="position:absolute;left:484px;top:558px" width="20" height="19" viewBox="0 0 20 19"><path d="M15.7 10.6A6.3 6.3 0 1 1 13.2 4.6" fill="none" stroke="#f00" stroke-width="2.4"/><path d="M11.5 8L17 2.5V8z" fill="#f00"/><path d="M8 4H11L10.2 10.5H8.8z" fill="#000"/><rect x="8.4" y="8" width="0.8" height="1" fill="#c00"/><rect x="9.8" y="8" width="0.8" height="1" fill="#c00"/><circle cx="9.5" cy="13.3" r="1.4" fill="#000"/></svg><svg style="position:absolute;left:239px;top:553px" width="21" height="21" viewBox="0 0 21 21" shape-rendering="crispEdges"><rect x="0" y="0" width="11" height="11" fill="#000"/><rect x="2" y="1" width="7" height="1" fill="#00ff00"/><rect x="9" y="2" width="1" height="7" fill="#00ff00"/><rect x="1" y="3" width="7" height="7" fill="#00ff00"/><text x="4.6" y="9" font-size="8.5" font-weight="bold" text-anchor="middle" fill="#000" font-family="Liberation Serif">P</text><rect x="10" y="0" width="11" height="11" fill="#000"/><rect x="12" y="1" width="7" height="1" fill="#ffff00"/><rect x="19" y="2" width="1" height="7" fill="#ffff00"/><rect x="11" y="3" width="7" height="7" fill="#ffff00"/><text x="14.6" y="9" font-size="8.5" font-weight="bold" text-anchor="middle" fill="#000" font-family="Liberation Serif">S</text><rect x="0" y="10" width="11" height="11" fill="#000"/><rect x="2" y="11" width="7" height="1" fill="#ff0000"/><rect x="9" y="12" width="1" height="7" fill="#ff0000"/><rect x="1" y="13" width="7" height="7" fill="#ff0000"/><text x="4.6" y="19" font-size="8.5" font-weight="bold" text-anchor="middle" fill="#ff0" font-family="Liberation Serif">P</text><rect x="10" y="10" width="11" height="11" fill="#000"/><rect x="12" y="11" width="7" height="1" fill="#0000ff"/><rect x="19" y="12" width="1" height="7" fill="#0000ff"/><rect x="11" y="13" width="7" height="7" fill="#0000ff"/><text x="14.6" y="19" font-size="8.5" font-weight="bold" text-anchor="middle" fill="#ff0" font-family="Liberation Serif">C</text></svg>
<svg style="position:absolute;left:553px;top:557px" width="24" height="21" viewBox="0 0 24 21"><circle cx="11.5" cy="10.5" r="5.6" fill="#ff0"/><g fill="#ff0" shape-rendering="crispEdges"><rect x="11" y="3" width="1" height="2"/><rect x="4" y="10" width="2" height="1"/><rect x="17" y="10" width="2" height="1"/><rect x="6" y="5" width="1" height="1"/><rect x="16" y="5" width="1" height="1"/><rect x="6" y="15" width="1" height="1"/><rect x="16" y="15" width="1" height="1"/></g><circle cx="11.5" cy="10" r="3.2" fill="#fffde0" stroke="#000" stroke-width="1.4"/><rect x="11" y="9" width="1" height="3" fill="#909090"/><path d="M10 13H13V18L11.5 19.5L10 18z" fill="#000"/><rect x="11" y="14" width="1" height="1" fill="#ff0"/><rect x="11" y="16" width="1" height="1" fill="#ddd"/></svg><svg style="position:absolute;left:847px;top:580px" width="24" height="21" viewBox="0 0 24 21"><g transform="translate(11.5,10.5) scale(0.82) translate(-11.5,-10.5)"><circle cx="11.5" cy="10.5" r="5.6" fill="#ff0"/><g fill="#ff0" shape-rendering="crispEdges"><rect x="11" y="3" width="1" height="2"/><rect x="4" y="10" width="2" height="1"/><rect x="17" y="10" width="2" height="1"/><rect x="6" y="5" width="1" height="1"/><rect x="16" y="5" width="1" height="1"/><rect x="6" y="15" width="1" height="1"/><rect x="16" y="15" width="1" height="1"/></g><circle cx="11.5" cy="10" r="3.2" fill="#fffde0" stroke="#000" stroke-width="1.4"/><rect x="11" y="9" width="1" height="3" fill="#909090"/><path d="M10 13H13V18L11.5 19.5L10 18z" fill="#000"/><rect x="11" y="14" width="1" height="1" fill="#ff0"/><rect x="11" y="16" width="1" height="1" fill="#ddd"/></g></svg><svg style="position:absolute;left:506px;top:557px" width="24" height="21" viewBox="0 0 24 21"><path d="M3.5 3.5H9.5L12.5 6.5V14.5H3.5z" fill="#fff" stroke="#000" stroke-width="1.2"/><path d="M9.5 3.5V6.5H12.5" fill="none" stroke="#000"/><g fill="#000" shape-rendering="crispEdges"><rect x="5" y="5" width="2" height="1"/><rect x="5" y="7" width="2" height="1"/><rect x="5" y="9" width="4" height="1"/><rect x="10" y="9" width="1" height="1"/><rect x="5" y="11" width="2" height="1"/><rect x="8" y="11" width="3" height="1"/></g><path d="M9 11.5H17.5V19.5M9.5 14.5V19.5" fill="none" stroke="#000" stroke-width="1.2"/><rect x="10" y="15" width="1" height="5" fill="#ff0"/><rect x="16" y="12" width="1" height="8" fill="#ff0"/><rect x="11" y="15" width="5" height="5" fill="#fff"/><path d="M11 4H15V8H18.5L15 12L11.5 8H13V5.5H11z" fill="#f00"/></svg>
<svg style="position:absolute;left:434px;top:557px" width="48" height="21" viewBox="0 0 48 21"><path d="M7.5 3.5H13L16.5 7V11.5H7.5z" fill="#fff" stroke="#000" stroke-width="1.1"/><path d="M13 3.5V7H16.5" fill="none" stroke="#000" stroke-width="0.9"/><g fill="#000" shape-rendering="crispEdges"><rect x="9" y="5" width="1" height="1"/><rect x="9" y="7" width="2" height="1"/><rect x="9" y="9" width="4" height="1"/><rect x="14" y="9" width="1" height="1"/></g><path d="M4.5 11.5H19.5V18.5H4.5z" fill="#fff" stroke="#000" stroke-width="1.1"/><rect x="5" y="12.3" width="14" height="2.4" fill="#e0e0e0"/><g fill="#b8b8b8" shape-rendering="crispEdges"><rect x="6" y="13" width="1" height="1"/><rect x="8" y="13" width="1" height="1"/><rect x="10" y="13" width="1" height="1"/><rect x="12" y="13" width="1" height="1"/><rect x="14" y="13" width="1" height="1"/></g><rect x="17" y="13" width="1" height="1" fill="#f00"/><rect x="5" y="15" width="14" height="1" fill="#000"/><rect x="5" y="16" width="14" height="2" fill="#c8c8c8"/><rect x="33" y="3" width="5" height="2" fill="#000"/><rect x="30" y="5" width="11" height="2.5" fill="#000"/><rect x="31" y="6" width="9" height="0.8" fill="#c8c8c8"/><path d="M31 7.5H40V18.5H31z" fill="#000"/><g shape-rendering="crispEdges"><rect x="32" y="8" width="1" height="9" fill="#e8e8e8"/><rect x="34" y="8" width="1" height="9" fill="#909090"/><rect x="36" y="8" width="1" height="9" fill="#e8e8e8"/><rect x="38" y="8" width="1" height="9" fill="#909090"/><rect x="29" y="10" width="1" height="1" fill="#000"/><rect x="41" y="10" width="1" height="1" fill="#000"/><rect x="30" y="9" width="1" height="1" fill="#000"/><rect x="40" y="9" width="1" height="1" fill="#000"/></g></svg>
<svg style="position:absolute;left:866px;top:580px" width="40" height="20" viewBox="0 0 40 20"><g shape-rendering="crispEdges"><path d="M4 3H11L15 6L20 10V18H13L12 17.5H9L8 17H6L5 16.5H4z" fill="#000"/><rect x="5" y="4" width="1" height="11" fill="#fff"/><rect x="7" y="4.5" width="1" height="11.5" fill="#fff"/><rect x="9" y="5" width="1" height="11.5" fill="#fff"/><path d="M11 6H14L19 10.5V17H11z" fill="#fff"/><rect x="12" y="8" width="2" height="1" fill="#000"/><rect x="12" y="10" width="2" height="1" fill="#000"/><rect x="12" y="12" width="6" height="1" fill="#000"/><rect x="12" y="14" width="6" height="1" fill="#000"/><rect x="12" y="16" width="4" height="1" fill="#000"/><rect x="20.5" y="2" width="1" height="16" fill="#808080"/><rect x="1" y="2" width="1" height="16" fill="#a0a0a0"/></g><path d="M28.5 10.5V7.5A4 3.5 0 0 1 36.5 7.5V10.5" fill="none" stroke="#000" stroke-width="2"/><rect x="25.5" y="10.5" width="12" height="7" rx="1" fill="#a0a0a0" stroke="#000" stroke-width="1.2"/><g shape-rendering="crispEdges"><rect x="26" y="12" width="11" height="1" fill="#e0e0e0"/><rect x="26" y="14" width="11" height="1" fill="#d0d0d0"/><rect x="26" y="16" width="11" height="1" fill="#808080"/><rect x="30" y="12" width="3" height="1" fill="#000"/><rect x="31" y="12" width="1" height="5" fill="#000"/></g></svg>
</body></html>
